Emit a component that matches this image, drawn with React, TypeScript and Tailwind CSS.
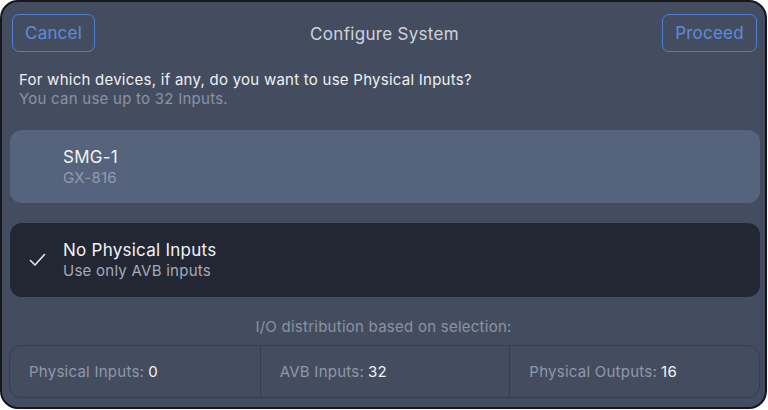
const stats = [
  { label: "Physical Inputs:", value: "0" },
  { label: "AVB Inputs:", value: "32" },
  { label: "Physical Outputs:", value: "16" },
];

function Check() {
  return (
    <svg width="17" height="14" viewBox="0 0 17 14" fill="none">
      <path
        d="M1.5 7.5 L6 12 L15.5 1.5"
        stroke="#e6e8ee"
        strokeWidth="1.6"
        strokeLinecap="round"
        strokeLinejoin="round"
      />
    </svg>
  );
}

export default function App() {
  return (
    <div
      className="w-[768px] h-[410px] bg-white"
      style={{ fontFamily: "Inter, 'Noto Sans', sans-serif" }}
    >
      <div className="w-[767px] h-[409px] rounded-[18px] border-2 border-[#15171c] bg-[#444d60] flex flex-col">
        <div className="grid grid-cols-[1fr_auto_1fr] items-center pl-[10px] pr-[8px] pt-[12px]">
          <div className="flex">
            <button className="w-[83px] h-[38px] pt-[2px] rounded-[7px] border-[1.5px] border-[#4d7fd4] text-[#5b8ce0] text-[17px] tracking-[0.2px]">
              Cancel
            </button>
          </div>
          <div className="text-[17px] tracking-[0.3px] text-[#cfd3dc] pt-[3px]">
            Configure System
          </div>
          <div className="flex justify-end">
            <button className="w-[95px] h-[38px] pt-[2px] rounded-[7px] border-[1.5px] border-[#4d7fd4] text-[#5b8ce0] text-[17px] tracking-[0.2px]">
              Proceed
            </button>
          </div>
        </div>

        <div className="pl-[17px] mt-[18px] text-[15px] leading-[19px] tracking-[0.25px]">
          <div className="text-[#eef0f4]">
            For which devices, if any, do you want to use Physical Inputs?
          </div>
          <div className="text-[#8a93a4]">You can use up to 32 Inputs.</div>
        </div>

        <div className="pl-[8px] pr-[5px] mt-[22px] flex flex-col gap-[20px] tracking-[0.25px]">
          <div className="h-[73px] rounded-[12px] bg-[#56637c] pl-[53px] flex flex-col justify-center">
            <div className="text-[17px] leading-[21px] text-[#f1f3f6]">SMG-1</div>
            <div className="text-[15px] leading-[19px] text-[#939cad]">GX-816</div>
          </div>
          <div className="h-[74px] rounded-[12px] bg-[#232733] flex items-center">
            <div className="w-[53px] flex justify-center pl-[2px]">
              <Check />
            </div>
            <div className="flex flex-col">
              <div className="text-[17px] leading-[21px] text-[#f1f3f6]">
                No Physical Inputs
              </div>
              <div className="text-[15px] leading-[19px] text-[#a4abb9]">
                Use only AVB inputs
              </div>
            </div>
          </div>
        </div>

        <div className="mt-[20px] text-center text-[15px] leading-[19px] tracking-[0.25px] text-[#8a93a4]">
          I/O distribution based on selection:
        </div>

        <div className="ml-[7px] mr-[5px] mt-[9px] h-[53px] rounded-[12px] border border-[#363e4f] grid grid-cols-3">
          {stats.map((s, i) => (
            <div
              key={s.label}
              className={`flex items-center pl-[19px] pt-[1px] text-[15px] tracking-[0.25px] ${
                i > 0 ? "border-l border-[#363e4f]" : ""
              }`}
            >
              <span className="text-[#8f98a9]">{s.label}</span>
              <span className="text-[#f1f3f6] ml-[4px]">{s.value}</span>
            </div>
          ))}
        </div>
      </div>
    </div>
  );
}
